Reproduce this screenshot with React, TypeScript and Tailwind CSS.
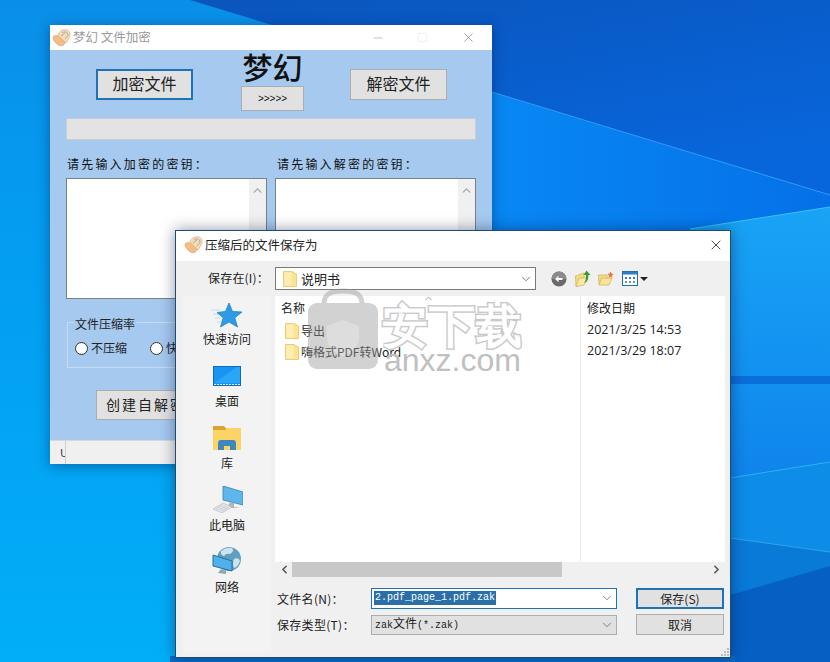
import React from 'react';
import { ChevronDown, ChevronLeft, ChevronRight, ChevronUp, Minus, Square, X } from 'lucide-react';

const HandLogo: React.FC = () => (
  <svg width="20" height="18" viewBox="0 0 20 18">
    <path d="M1 9 C1 6 4 6 6 7 L13 13 C13 17 8 18 5 15 C3 13 1 11 1 9Z" fill="#f3bd85" stroke="#d8985f" strokeWidth="0.6" />
    <path d="M6 6 C7 2 11 0 15 1 C18 2 19 6 17 9 L14 14 C12 12 8 9 6 6Z" fill="#f9dcb6" stroke="#c9a27c" strokeWidth="0.6" />
    <path d="M10 4 C12 2 15 3 16 5 C16 8 14 8 13 10 M9 7 L13 4" fill="none" stroke="#a8a8a8" strokeWidth="1" />
  </svg>
);

const FolderIcon: React.FC = () => (
  <svg width="14" height="17" viewBox="0 0 14 17">
    <path d="M0.5 1.5 H9 L13.5 4 V16.5 H0.5Z" fill="#fde28f" stroke="#e5c56c" strokeWidth="0.8" />
    <path d="M1.5 2.5 H8.5 V15.5 H1.5Z" fill="#ffeeb4" />
  </svg>
);

const StarIcon: React.FC = () => (
  <svg width="32" height="28" viewBox="0 0 32 28">
    <path d="M0 8 H9 M2 12 H9 M4 16 H9 M6 20 H9" stroke="#bcd9f2" strokeWidth="1" />
    <path d="M18 1 L21.5 9.5 L31 10 L23.8 15.8 L26.5 25 L18 20 L9.5 25 L12.2 15.8 L6 10.5 L14.5 9.5Z" fill="#2f9be6" stroke="#1c83d1" strokeWidth="0.8" />
  </svg>
);

const DesktopIcon: React.FC = () => (
  <svg width="28" height="20" viewBox="0 0 28 20">
    <rect x="0.5" y="0.5" width="27" height="19" fill="#1994f3" stroke="#0d6cb8" />
    <path d="M1 17 L24 1 H27 V17Z" fill="#29a6f8" />
    <path d="M1 18.5 H27" stroke="#d7ecfb" strokeWidth="1" strokeDasharray="2 1" />
  </svg>
);

const LibraryIcon: React.FC = () => (
  <svg width="28" height="24" viewBox="0 0 28 24">
    <path d="M0 0 H11 L13 2 H28 V24 H0Z" fill="#fcd466" />
    <path d="M0 0 H11 L13 3 V4 H0Z" fill="#d9a52c" />
    <path d="M5 24 V17 Q5 14 8 14 H20 Q23 14 23 17 V24 H17 V20 H11 V24Z" fill="#3f87bd" />
  </svg>
);

const ComputerIcon: React.FC = () => (
  <svg width="30" height="27" viewBox="0 0 30 27">
    <path d="M10 0 L30 6 V19 L10 14Z" fill="#5eb6ee" stroke="#3b7fae" strokeWidth="0.8" />
    <path d="M21 17 V21 L27 22 L18 22 L15 20 L17 16Z" fill="#a8b6c0" />
    <path d="M0 23 L10 17 L19 21 L9 27Z" fill="#e2e5e8" stroke="#b4babf" strokeWidth="0.6" />
    <path d="M3 23 L10 19 M6 24 L13 20 M9 25 L15 21" stroke="#c2c7cb" strokeWidth="0.8" />
  </svg>
);

const NetworkIcon: React.FC = () => (
  <svg width="30" height="28" viewBox="0 0 30 28">
    <circle cx="17" cy="12" r="12" fill="#5f9fc2" />
    <path d="M9 4 Q14 0 20 1 Q23 4 18 7 Q14 6 12 9 Q8 8 9 4Z M22 12 Q27 10 28 14 Q26 20 22 21 Q20 17 22 12Z" fill="#cfe3ee" />
    <path d="M1 8 L20 14 V24 L1 19Z" fill="#4fb0ec" stroke="#2f6f98" strokeWidth="1" />
    <path d="M9 22 L14 24 V27 L6 26Z" fill="#8fa6b5" />
  </svg>
);

const BackIcon: React.FC = () => (
  <svg width="16" height="16" viewBox="0 0 16 16">
    <circle cx="8" cy="8" r="7.5" fill="#6a6a6a" />
    <path d="M0.5 8 A7.5 7.5 0 0 1 15.5 8Z" fill="#8a8a8a" />
    <path d="M11.5 7 H7.5 V4.8 L4 8 L7.5 11.2 V9 H11.5Z" fill="#fff" />
  </svg>
);

const UpFolderIcon: React.FC = () => (
  <svg width="16" height="17" viewBox="0 0 16 17">
    <path d="M0.5 6 L9 3 V13 L1 16.5Z" fill="#f6dc85" stroke="#cfae52" strokeWidth="0.7" />
    <path d="M1 16.5 L4 8 H13 L9 15Z" fill="#fbe9a5" stroke="#cfae52" strokeWidth="0.7" />
    <path d="M9 13 C11 11 11 8 11 5 H8.5 L11.5 0.5 L15.5 5 H13.2 C13.5 9 12.5 12 9 13Z" fill="#3f9a2c" />
  </svg>
);

const NewFolderIcon: React.FC = () => (
  <svg width="16" height="15" viewBox="0 0 16 15">
    <path d="M0.5 4 H9 V13.5 H1Z" fill="#f6dc85" stroke="#cfae52" strokeWidth="0.7" />
    <path d="M1 14 L3.5 7 H14 L11 14Z" fill="#fbe49a" stroke="#cfae52" strokeWidth="0.7" />
    <path d="M12.5 0.5 L13.4 2.6 L15.6 3 L14 4.6 L14.4 6.8 L12.5 5.8 L10.6 6.8 L11 4.6 L9.4 3 L11.6 2.6Z" fill="#e9793a" />
  </svg>
);

const ViewIcon: React.FC = () => (
  <svg width="16" height="15" viewBox="0 0 16 15">
    <rect x="0.5" y="0.5" width="15" height="14" fill="#fff" stroke="#1f6fb5" />
    <rect x="1" y="1" width="14" height="2.5" fill="#2b7fc4" />
    <path d="M3 6 h2 v2 h-2Z M7 6 h2 v2 h-2Z M11 6 h2 v2 h-2Z" fill="#3f78a8" />
    <path d="M3 10 h2 v2 h-2Z M7 10 h2 v2 h-2Z M11 10 h2 v2 h-2Z" fill="#6a93b5" />
  </svg>
);

const Wallpaper: React.FC = () => (
  <svg className="absolute inset-0" width="830" height="662" viewBox="0 0 830 662">
    <defs>
      <linearGradient id="left" x1="0" y1="0" x2="0" y2="1">
        <stop offset="0" stopColor="#0a8fe8" />
        <stop offset="0.3" stopColor="#049bf0" />
        <stop offset="1" stopColor="#02aef8" />
      </linearGradient>
      <linearGradient id="dark" x1="0" y1="0" x2="0.6" y2="1">
        <stop offset="0" stopColor="#0a55bc" />
        <stop offset="1" stopColor="#0866dc" />
      </linearGradient>
      <linearGradient id="mid" x1="0" y1="0" x2="1" y2="0">
        <stop offset="0" stopColor="#0888f4" />
        <stop offset="1" stopColor="#0570e8" />
      </linearGradient>
      <linearGradient id="right" x1="0" y1="0" x2="0" y2="1">
        <stop offset="0" stopColor="#18a4f6" />
        <stop offset="1" stopColor="#0f84ec" />
      </linearGradient>
    </defs>
    <rect width="830" height="662" fill="url(#left)" />
    <rect x="492" y="0" width="338" height="662" fill="url(#mid)" />
    <polygon points="190,0 830,0 830,195 492,92" fill="url(#dark)" />
    <polygon points="690,229 830,207 830,480 690,480" fill="url(#right)" />
    <line x1="492" y1="92" x2="830" y2="195" stroke="#2f9cf6" strokeWidth="1" />
    <line x1="690" y1="229" x2="830" y2="207" stroke="#3cc0f8" strokeWidth="1" />
    <rect x="730" y="376" width="100" height="8" fill="#0b6fda" />
    <polygon points="730,478 830,462 830,552 730,538" fill="#0d8ce8" />
    <line x1="730" y1="478" x2="830" y2="462" stroke="#2cb4f0" strokeWidth="1" />
    <polygon points="730,538 830,552 830,662 730,662" fill="#0a7ad8" />
    <line x1="730" y1="538" x2="830" y2="552" stroke="#2aa8ec" strokeWidth="1" />
    <polygon points="730,595 830,566 830,662 730,662" fill="#0660c4" />
    <rect x="170" y="656" width="565" height="6" fill="#0a6cc4" />
  </svg>
);

const TextAreaBox: React.FC = () => (
  <div className="flex h-[121px] w-[201px] justify-end border border-[#7a8088] bg-white">
    <div className="flex w-[17px] justify-center bg-[#f0f0f0] pt-[5px]">
      <ChevronUp size={13} strokeWidth={2.5} className="text-[#a6a6a6]" />
    </div>
  </div>
);

const MainWindow: React.FC = () => (
  <div className="absolute left-[50px] top-[25px] flex h-[439px] w-[442px] flex-col overflow-hidden bg-[#a6c9ef] font-['Noto_Sans_CJK_SC',sans-serif] shadow-[0_2px_12px_rgba(0,30,80,0.45)]">
    <div className="flex h-[25px] shrink-0 items-center bg-white pl-[2px]">
      <HandLogo />
      <span className="ml-[1px] text-[12.5px] text-[#9a9a9a]">梦幻 文件加密</span>
      <div className="ml-auto flex items-center text-[#9a9a9a]">
        <Minus size={14} strokeWidth={1} className="mr-[32px]" />
        <Square size={11} strokeWidth={0.8} className="mr-[33px] text-[#d4d4d4]" />
        <X size={15} strokeWidth={1} className="mr-[16px] text-[#707070]" />
      </div>
    </div>
    <div className="flex h-[60px] shrink-0 items-start pl-[46px]">
      <button className="mt-[19px] h-[31px] w-[97px] border-2 border-[#1d72b8] bg-[#e1e1e1] pb-[3px] text-[16px] text-[#222]">加密文件</button>
      <div className="ml-[48px] flex w-[63px] flex-col items-center">
        <div className="h-[36px] whitespace-nowrap text-[30px] font-medium leading-[32px] text-[#111]">梦幻</div>
        <button className="h-[25px] w-[63px] border border-[#adadad] bg-[#e1e1e1] font-['Liberation_Sans',sans-serif] text-[10px] text-[#111]">&gt;&gt;&gt;&gt;&gt;</button>
      </div>
      <button className="ml-[46px] mt-[19px] h-[31px] w-[97px] border border-[#adadad] bg-[#e1e1e1] pb-[3px] text-[16px] text-[#222]">解密文件</button>
    </div>
    <div className="mx-[16px] mt-[8px] h-[22px] w-[410px] shrink-0 border border-[#c6cdd6] bg-[#e3e3e3]" />
    <div className="ml-[16px] mt-[15px] flex h-[23px] shrink-0 text-[12px] tracking-[2.2px] text-[#111]">
      <span className="w-[210px] pl-[1px]">请先输入加密的密钥：</span>
      <span className="pl-[1px]">请先输入解密的密钥：</span>
    </div>
    <div className="ml-[16px] flex shrink-0 gap-[8px]">
      <TextAreaBox />
      <TextAreaBox />
    </div>
    <div className="relative ml-[17px] mt-[23px] h-[46px] w-[408px] shrink-0 border border-[#c7daf3]">
      <span className="absolute left-[6px] top-[-7px] bg-[#a6c9ef] px-[1px] text-[12px] leading-[16px] text-[#222]">文件压缩率</span>
      <div className="ml-[7px] mt-[16px] flex items-center text-[12px] text-[#222]">
        <span className="h-[13px] w-[13px] rounded-full border border-[#333] bg-white" />
        <span className="ml-[3px] w-[59px]">不压缩</span>
        <span className="h-[13px] w-[13px] rounded-full border border-[#333] bg-white" />
        <span className="ml-[3px]">快速压缩</span>
      </div>
    </div>
    <button className="ml-[46px] mt-[22px] h-[30px] w-[160px] shrink-0 border border-[#adadad] bg-[#e1e1e1] pb-[2px] pl-[9px] text-left text-[14px] tracking-[2px] text-[#222]">创建自解密文件</button>
    <div className="mt-auto flex h-[24px] shrink-0 items-center border-t border-[#d8d8d8] bg-[#f0f0f0] pl-[10px]">
      <span className="w-[5px] overflow-hidden text-[11px] text-[#333]">U</span>
      <span className="h-full border-l border-[#cfcfcf]" />
    </div>
  </div>
);

const Place: React.FC<{ label: string; children: React.ReactNode; height: string; gap: string }> = ({ label, children, height, gap }) => (
  <div className={`flex shrink-0 flex-col items-center justify-end ${height}`}>
    <div className={`flex items-end justify-center ${gap}`}>{children}</div>
    <span className="text-[12px] leading-[16px] text-[#222]">{label}</span>
  </div>
);

const SaveDialog: React.FC = () => (
  <div className="absolute left-[175px] top-[230px] flex h-[428px] w-[556px] flex-col border border-[#1e4c6c] bg-[#f0f0f0] font-['Noto_Sans_CJK_SC',sans-serif] shadow-[0_0_14px_rgba(0,20,60,0.45)]">
    <div className="flex h-[30px] shrink-0 items-center bg-white pb-[2px] pl-[8px]">
      <HandLogo />
      <span className="ml-[1px] text-[12.5px] text-[#222]">压缩后的文件保存为</span>
      <X size={16} strokeWidth={1.2} className="ml-auto mr-[6px] text-[#222]" />
    </div>
    <div className="flex h-[35px] shrink-0 items-center">
      <span className="ml-[32px] mt-[-2px] w-[67px] text-[12px] tracking-[0.2px] text-[#222]">保存在(I)：</span>
      <div className="flex h-[23px] w-[261px] items-center border border-[#7a7a7a] bg-white pl-[7px]">
        <FolderIcon />
        <span className="ml-[4px] text-[13px] text-[#222]">说明书</span>
        <ChevronDown size={14} strokeWidth={1.2} className="ml-auto mr-[2px] text-[#444]" />
      </div>
      <div className="ml-[15px] flex items-center">
        <BackIcon />
        <span className="ml-[8px]"><UpFolderIcon /></span>
        <span className="ml-[7px]"><NewFolderIcon /></span>
        <span className="ml-[8px]"><ViewIcon /></span>
        <span className="ml-[2px] h-0 w-0 border-x-[4px] border-t-[4px] border-x-transparent border-t-[#222]" />
      </div>
    </div>
    <div className="flex min-h-0 flex-1">
      <div className="mb-[5px] ml-[7px] flex w-[88px] shrink-0 flex-col items-center bg-[#f3f3f3]">
        <Place label="快速访问" height="h-[51px]" gap="pb-[1px]"><StarIcon /></Place>
        <Place label="桌面" height="h-[62px]" gap="pb-[7px]"><DesktopIcon /></Place>
        <Place label="库" height="h-[62px]" gap="pb-[5px]"><LibraryIcon /></Place>
        <Place label="此电脑" height="h-[62px]" gap="pb-[4px] pl-[2px]"><ComputerIcon /></Place>
        <Place label="网络" height="h-[62px]" gap="pb-[4px]"><NetworkIcon /></Place>
      </div>
      <div className="ml-[4px] flex w-[450px] flex-col">
        <div className="relative h-[266px] shrink-0 bg-white">
          <div className="absolute bottom-0 left-[305px] top-0 border-l border-[#ececec]" />
          <ChevronUp size={11} strokeWidth={1.2} className="absolute left-[148px] top-[-3px] text-[#555]" />
          <div className="flex h-[21px] items-end text-[12px] text-[#222]">
            <span className="ml-[6px] w-[306px]">名称</span>
            <span>修改日期</span>
          </div>
          <div className="mt-[3px] flex h-[21px] items-center text-[12px] text-[#222]">
            <span className="ml-[10px]"><FolderIcon /></span>
            <span className="ml-[2px] w-[286px]">导出</span>
            <span className="font-['Open_Sans',sans-serif] text-[12.5px]">2021/3/25 14:53</span>
          </div>
          <div className="flex h-[21px] items-center text-[12px] text-[#222]">
            <span className="ml-[10px]"><FolderIcon /></span>
            <span className="ml-[2px] w-[286px]">嗨格式PDF转Word</span>
            <span className="font-['Open_Sans',sans-serif] text-[12.5px]">2021/3/29 18:07</span>
          </div>
        </div>
        <div className="flex h-[15px] shrink-0 items-center bg-[#f0f0f0]">
          <ChevronLeft size={13} strokeWidth={3} className="ml-[2px] w-[15px] text-[#555]" />
          <div className="h-full w-[270px] bg-[#c8c8c8]" />
          <ChevronRight size={13} strokeWidth={3} className="ml-auto mr-[2px] text-[#555]" />
        </div>
        <div className="mt-[10px] flex h-[22px] shrink-0 items-center text-[12px] text-[#222]">
          <span className="ml-[2px] mt-[1px] w-[94px] tracking-[0.3px]">文件名(N)：</span>
          <div className="flex h-[21px] w-[246px] items-center border border-[#1d72b8] bg-white pl-[2px]">
            <span className="bg-[#2a6fa8] px-[1px] font-['Liberation_Mono',monospace] text-[10px] leading-[14px] text-white">2.pdf_page_1.pdf.zak</span>
            <ChevronDown size={14} strokeWidth={1.2} className="ml-auto mr-[2px] text-[#555]" />
          </div>
          <button className="ml-[19px] h-[21px] w-[88px] border-2 border-[#1d72b8] bg-[#e1e1e1] text-[12px]">保存(S)</button>
        </div>
        <div className="mt-[5px] flex h-[21px] shrink-0 items-center text-[12px] text-[#222]">
          <span className="ml-[2px] w-[94px] tracking-[0.3px]">保存类型(T)：</span>
          <div className="flex h-[20px] w-[246px] items-center border border-[#adadad] bg-[#e1e1e1] pl-[3px]">
            <span className="font-['Liberation_Mono','Noto_Sans_CJK_SC',monospace] text-[10px]">zak<span className="text-[12px]">文件</span>(*.zak)</span>
            <ChevronDown size={14} strokeWidth={1.2} className="ml-auto mr-[2px] text-[#555]" />
          </div>
          <button className="ml-[19px] h-[21px] w-[88px] border border-[#adadad] bg-[#e1e1e1] text-[12px]">取消</button>
        </div>
      </div>
    </div>
    <div className="absolute bottom-[1px] right-[1px] grid grid-cols-3 gap-[1px]">
      <span className="col-start-3 h-[2px] w-[2px] bg-[#bbb]" />
      <span className="col-start-2 h-[2px] w-[2px] bg-[#bbb]" />
      <span className="h-[2px] w-[2px] bg-[#bbb]" />
      <span className="h-[2px] w-[2px] bg-[#bbb]" />
      <span className="h-[2px] w-[2px] bg-[#bbb]" />
      <span className="h-[2px] w-[2px] bg-[#bbb]" />
    </div>
  </div>
);

const Watermark: React.FC = () => (
  <div className="pointer-events-none absolute left-[307px] top-[288px] flex">
    <svg width="72" height="82" viewBox="0 0 72 82" className="opacity-45">
      <path d="M17 20 V16 C17 5 25 3 36 3 C47 3 55 5 55 16 V20" fill="none" stroke="#9a9a9a" strokeWidth="5" />
      <rect x="1" y="15" width="70" height="66" rx="9" fill="#9c9c9c" />
      <path d="M36 32 L52 38 V50 C52 60 44 65 36 68 C28 65 20 60 20 50 V38Z" fill="#b4b4b4" />
    </svg>
    <div className="ml-[3px] flex flex-col items-start">
      <span className="mt-[13px] h-[46px] whitespace-nowrap text-[46px] font-bold leading-[46px] tracking-[1px] text-white [-webkit-text-stroke:3px_#cacaca] [paint-order:stroke_fill]">安下载</span>
      <span className="ml-[2px] mt-[-4px] font-['Liberation_Sans',sans-serif] text-[32px] leading-[34px] text-[#c0c0c0]">anxz.com</span>
    </div>
  </div>
);

const App: React.FC = () => {
  return (
    <div className="relative h-[662px] w-[830px] overflow-hidden">
      <Wallpaper />
      <MainWindow />
      <SaveDialog />
      <Watermark />
    </div>
  );
};

export default App;
